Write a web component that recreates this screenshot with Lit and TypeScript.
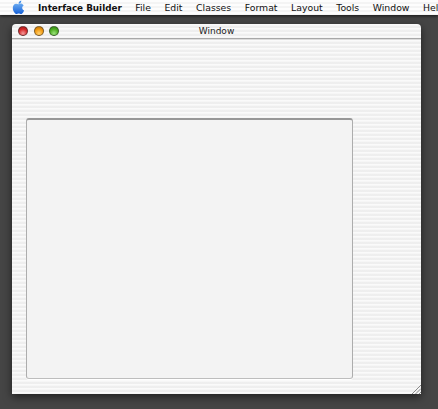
import { LitElement, html, css } from "lit";
import { customElement } from "lit/decorators.js";

const MENUS = ["File", "Edit", "Classes", "Format", "Layout", "Tools", "Window", "Help"];

@customElement("app-root")
export class AppRoot extends LitElement {
  static styles = css`
    :host {
      display: block;
      width: 438px;
      height: 409px;
      overflow: hidden;
      background: #454545;
      font-family: "DejaVu Sans", sans-serif;
      color: #111;
    }
    .menubar {
      height: 15px;
      display: flex;
      align-items: center;
      gap: 13.6px;
      padding-left: 12px;
      white-space: nowrap;
      background: repeating-linear-gradient(#fdfdfd 0 2px, #f4f4f4 2px 4px);
      box-shadow: 0 1px 3px rgba(0, 0, 0, 0.7);
      font-size: 9.3px;
      position: relative;
    }
    .apple {
      width: 13px;
      height: 15px;
      flex: none;
      margin-right: -0.5px;
      margin-top: -1px;
    }
    .app {
      font-weight: 700;
      font-size: 8.8px;
      flex: none;
    }
    .menu {
      flex: none;
    }
    .window {
      margin: 9px 0 0 12px;
      width: 409px;
      height: 370px;
      border-radius: 4px 4px 0 0;
      background: repeating-linear-gradient(#fafafa 0, #fafafa 1px, #f2f2f2 2px, #ebebeb 3px, #f2f2f2 4px);
      box-shadow: 0 3px 8px rgba(0, 0, 0, 0.55);
      display: flex;
      flex-direction: column;
      position: relative;
    }
    .titlebar {
      height: 14px;
      flex: none;
      display: flex;
      align-items: center;
      justify-content: center;
      position: relative;
      border-bottom: 1px solid #a8a8a8;
      box-shadow: 0 1px 0 #dcdcdc;
      font-size: 9px;
      color: #222;
    }
    .lights {
      position: absolute;
      left: 6px;
      top: 2px;
      display: flex;
      gap: 5.5px;
    }
    .light {
      width: 10px;
      height: 10px;
      border-radius: 50%;
      box-sizing: border-box;
      border: 1px solid rgba(50, 50, 50, 0.6);
    }
    .red {
      background: radial-gradient(circle at 50% 80%, #f59a9a, #d62a2a 55%, #9c1414);
    }
    .yellow {
      background: radial-gradient(circle at 50% 80%, #ffd070, #f29a10 55%, #b86c08);
    }
    .green {
      background: radial-gradient(circle at 50% 80%, #9be27c, #4fae22 55%, #2a7e10);
    }
    .content {
      flex: 1;
      padding: 79px 68px 15px 14px;
      display: flex;
    }
    .panel {
      flex: 1;
      box-sizing: border-box;
      background: #f3f3f3;
      border: 1px solid #bdbdbd;
      border-top: 2px solid #979797;
      border-left-color: #adadad;
      border-right-color: #adadad;
      border-radius: 3px;
      box-shadow: 0 1px 0 #fff;
    }
    .grip {
      position: absolute;
      right: 0;
      bottom: 0;
      width: 9px;
      height: 9px;
    }
  `;

  render() {
    return html`
      <div class="menubar">
        <svg class="apple" viewBox="0 0 14 16">
          <defs>
            <linearGradient id="a" x1="0" y1="0" x2="0" y2="1">
              <stop offset="0" stop-color="#6aaaf0" />
              <stop offset="1" stop-color="#1560d8" />
            </linearGradient>
          </defs>
          <path
            fill="url(#a)"
            d="M7 4.6C8 3.900 9.700 3.400 11 4.200c.8.4 1.300 1 1.600 1.600-1.200.7-1.700 1.700-1.600 2.800.1 1.200.8 2.100 2 2.600-.4 1.200-1.100 2.400-2 3.300-.8.8-1.700.7-2.500.3-.9-.4-1.700-.4-2.600 0-.8.4-1.600.5-2.400-.3C1.800 13 .6 10.500.9 8 1.100 5.700 2.600 4.100 4.500 4c.9 0 1.800.3 2.500.6z"
          />
          <path fill="#3f8ce8" d="M7 4c0-1.600 1-3.200 3-3.600C10.100 2.200 9 3.700 7 4z" />
        </svg>
        <span class="app">Interface Builder</span>
        ${MENUS.map((name) => html`<span class="menu">${name}</span>`)}
      </div>
      <div class="window">
        <div class="titlebar">
          <div class="lights">
            <span class="light red"></span>
            <span class="light yellow"></span>
            <span class="light green"></span>
          </div>
          Window
        </div>
        <div class="content"><div class="panel"></div></div>
        <svg class="grip" viewBox="0 0 9 9" stroke="#8a8a8a" stroke-width="1">
          <path d="M0 9 9 0M3.500 9 9 3.500M7 9l2-2" />
        </svg>
      </div>
    `;
  }
}
